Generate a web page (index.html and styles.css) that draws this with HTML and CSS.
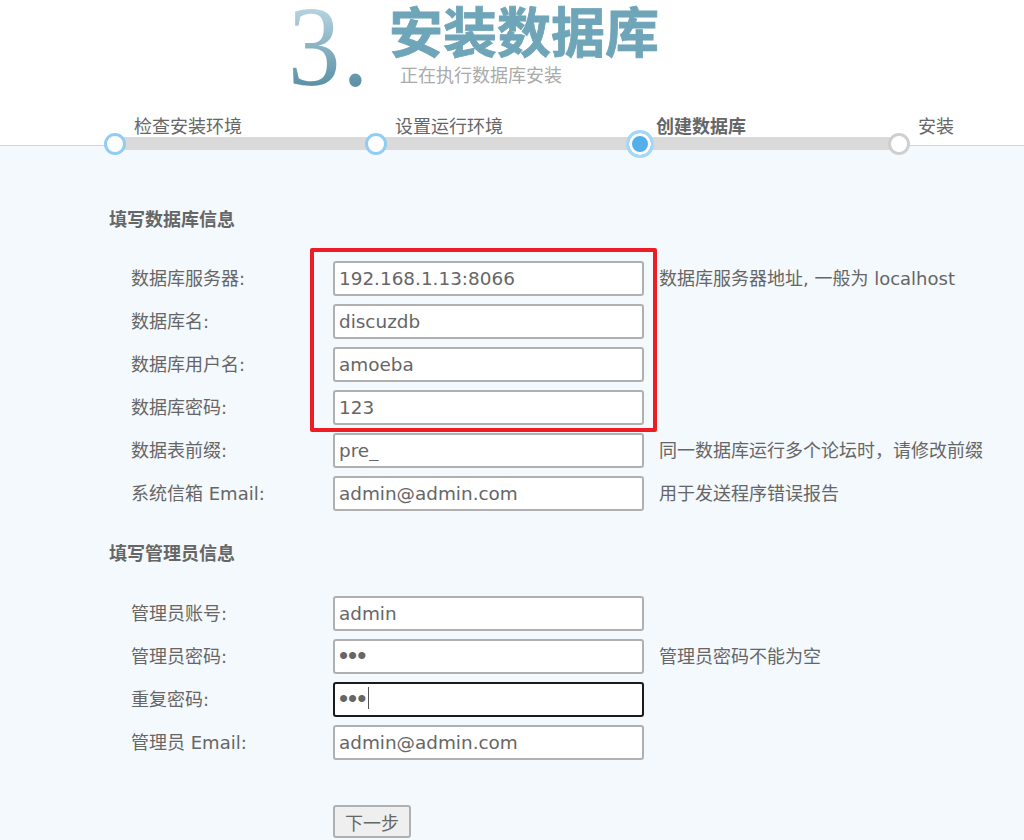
FILE: index.html
```html
<!DOCTYPE html>
<html lang="zh-CN">
<head>
<meta charset="utf-8">
<title>安装数据库</title>
<link rel="stylesheet" href="styles.css">
</head>
<body>
<header class="head">
  <div class="num">3.</div>
  <div class="titles">
    <h1 class="title">安装数据库</h1>
    <p class="sub">正在执行数据库安装</p>
  </div>
</header>
<ol class="steps">
  <li class="step done"><span class="step-label">检查安装环境</span><span class="track"></span><span class="dot"></span></li>
  <li class="step done"><span class="step-label">设置运行环境</span><span class="track"></span><span class="dot"></span></li>
  <li class="step current"><span class="step-label">创建数据库</span><span class="track"></span><span class="dot"></span></li>
  <li class="step last"><span class="step-label">安装</span><span class="dot"></span></li>
</ol>
<main class="main">
  <form class="form">
    <h2 class="section">填写数据库信息</h2>
    <div class="rows">
      <label class="label" for="a1">数据库服务器:</label><input class="field" id="a1" value="192.168.1.13:8066"><span class="hint">数据库服务器地址, 一般为 localhost</span>
      <label class="label" for="a2">数据库名:</label><input class="field" id="a2" value="discuzdb"><span class="hint"></span>
      <label class="label" for="a3">数据库用户名:</label><input class="field" id="a3" value="amoeba"><span class="hint"></span>
      <label class="label" for="a4">数据库密码:</label><input class="field" id="a4" value="123"><span class="hint"></span>
      <label class="label" for="a5">数据表前缀:</label><input class="field" id="a5" value="pre_"><span class="hint">同一数据库运行多个论坛时，请修改前缀</span>
      <label class="label" for="a6">系统信箱 Email:</label><input class="field" id="a6" value="admin@admin.com"><span class="hint">用于发送程序错误报告</span>
    </div>
    <h2 class="section second">填写管理员信息</h2>
    <div class="rows">
      <label class="label" for="b1">管理员账号:</label><input class="field" id="b1" value="admin"><span class="hint"></span>
      <label class="label" for="b2">管理员密码:</label><input class="field secret" id="b2" type="password" value="123"><span class="hint">管理员密码不能为空</span>
      <label class="label" for="b3">重复密码:</label><span class="caret-box"><input class="field secret active" id="b3" type="password" value="123"><span class="caret"></span></span><span class="hint"></span>
      <label class="label" for="b4">管理员 Email:</label><input class="field" id="b4" value="admin@admin.com"><span class="hint"></span>
    </div>
    <button class="next" type="button">下一步</button>
  </form>
  <div class="mark"></div>
</main>
</body>
</html>
```

FILE: styles.css
```css
* { box-sizing: border-box; }
html, body { margin: 0; padding: 0; }
body {
  width: 1024px;
  height: 840px;
  overflow: hidden;
  background: #fff;
  color: #666;
  font-family: "DejaVu Sans", "Noto Sans CJK SC", sans-serif;
  font-size: 18px;
}
.head {
  display: flex;
  height: 116px;
  padding-left: 288px;
}
.num {
  flex: none;
  width: 102px;
  height: 98px;
  font-family: "Liberation Serif", serif;
  font-size: 114px;
  line-height: 94px;
  letter-spacing: 2px;
  transform: scaleX(0.92);
  transform-origin: left center;
  background: linear-gradient(180deg, #b5d2df 10%, #5d93a8 85%);
  -webkit-background-clip: text;
  background-clip: text;
  color: transparent;
}
.title {
  margin: 0 0 0 -1px;
  font-family: "Noto Sans CJK SC", sans-serif;
  font-size: 54px;
  line-height: 60px;
  font-weight: 700;
  color: #6fa5b8;
  -webkit-text-stroke: 0.8px #6fa5b8;
}
.sub {
  margin: 5px 0 0 10px;
  font-family: "Noto Sans CJK SC", sans-serif;
  font-size: 18px;
  line-height: 18px;
  color: #aaa;
}
.steps {
  position: relative;
  z-index: 1;
  display: flex;
  list-style: none;
  margin: 0 0 -6px 115px;
  padding: 0;
  height: 35px;
}
.step {
  position: relative;
  flex: none;
  width: 261px;
  height: 35px;
}
.step-label {
  position: absolute;
  left: 19px;
  top: -2px;
  line-height: 22px;
  white-space: nowrap;
  font-family: "Noto Sans CJK SC", sans-serif;
}
.track {
  position: absolute;
  left: 0;
  right: 0;
  top: 21px;
  height: 13px;
  background: #dadada;
}
.dot {
  position: absolute;
  left: -11px;
  top: 17px;
  width: 22px;
  height: 22px;
  border-radius: 50%;
  background: #fff;
  border: 3px solid #8fcdf3;
}
.current .dot {
  left: -11px;
  top: 14px;
  width: 28px;
  height: 28px;
  border: 3px solid #a5d8f6;
  background: #53aeea;
  box-shadow: inset 0 0 0 3px #fff;
}
.current .step-label { font-weight: 700; }
.last { width: 100px; }
.last .dot {
  left: -10px;
  border-color: #cfcfcf;
}
.last .step-label { left: 20px; }
.main {
  position: relative;
  height: 695px;
  border-top: 1px solid #c3d9e5;
  background: #f4f9fd;
  padding: 60px 0 0 109px;
}
.section {
  margin: 0 0 31px;
  font-size: 18px;
  line-height: 24px;
  font-weight: 700;
  font-family: "Noto Sans CJK SC", sans-serif;
}
.second { margin: 29px 0 32px; }
.rows {
  display: grid;
  grid-template-columns: 202px 310px 1fr;
  grid-auto-rows: 35px;
  row-gap: 8px;
  padding-left: 22px;
  align-items: center;
}
.label, .hint { padding-bottom: 4px; }
.hint { padding-left: 16px; white-space: nowrap; }
.field {
  display: block;
  width: 311px;
  height: 35px;
  padding: 0 4px;
  border: 2px solid #b0b0b0;
  border-radius: 3px;
  background: #fff;
  color: #666;
  font: 18.4px "DejaVu Sans", "Noto Sans CJK SC", sans-serif;
  outline: none;
}
.secret { font: 26px "Liberation Sans", sans-serif; padding-bottom: 2px; }
.active { border-color: #1a1a1a; }
.caret-box { position: relative; display: block; height: 35px; }
.caret {
  position: absolute;
  left: 35px;
  top: 5px;
  width: 1px;
  height: 22px;
  background: #555;
}
.next {
  display: block;
  width: 78px;
  height: 33px;
  margin: 45px 0 0 224px;
  padding: 0;
  border: 2px solid #b0b0b0;
  border-radius: 3px;
  background: #efefef;
  color: #666;
  font: 18px "Noto Sans CJK SC", sans-serif;
}
.mark {
  position: absolute;
  left: 310px;
  top: 102px;
  width: 347px;
  height: 184px;
  border: 4px solid #ee1c25;
  border-radius: 2px;
  pointer-events: none;
}
```
